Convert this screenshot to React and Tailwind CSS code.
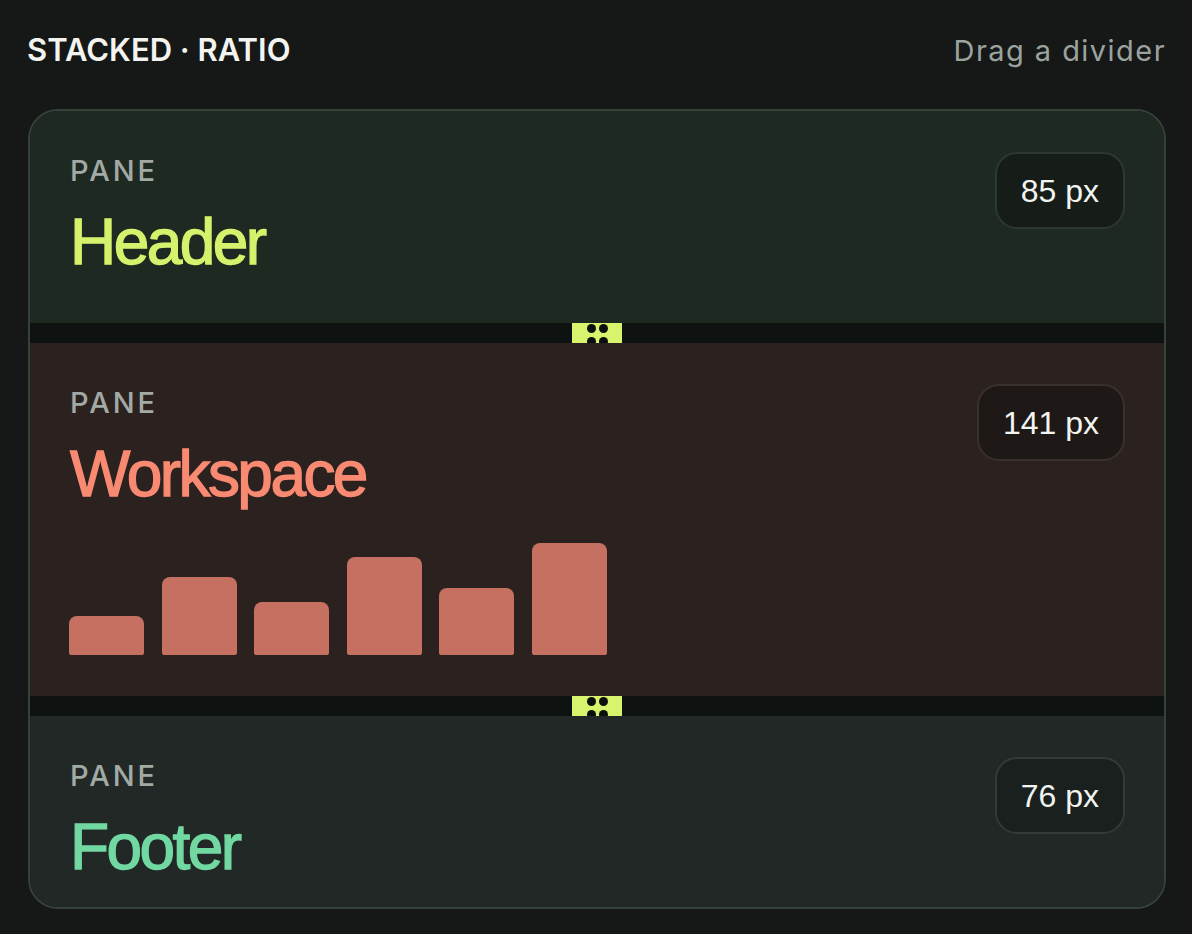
const panes = [
  {
    name: "Header",
    px: 85,
    height: "h-[212px]",
    bg: "bg-[#1e2922]",
    title: "text-[#d6f26c]",
    pill: "bg-[#161d19] border-[#2d3831]",
  },
  {
    name: "Workspace",
    px: 141,
    height: "h-[353px]",
    bg: "bg-[#2b2220]",
    title: "text-[#f98a72]",
    pill: "bg-[#1e1817] border-[#3a302c]",
    bars: [39, 78, 53, 98, 67, 112],
  },
  {
    name: "Footer",
    px: 76,
    height: "h-[191px]",
    bg: "bg-[#212826]",
    title: "text-[#72d8a2]",
    pill: "bg-[#1a201e] border-[#323b37]",
  },
];

function Divider() {
  return (
    <div className="flex h-[20px] justify-center bg-[#0e1210]">
      <div className="flex h-full w-[50px] justify-center overflow-hidden bg-[#d8f46c]">
        <div className="mt-[1px] grid h-[21px] grid-cols-2 gap-x-[3px] gap-y-[4px]">
          <span className="h-[9px] w-[9px] rounded-full bg-[#0c0f0d]" />
          <span className="h-[9px] w-[9px] rounded-full bg-[#0c0f0d]" />
          <span className="h-[9px] w-[9px] rounded-full bg-[#0c0f0d]" />
          <span className="h-[9px] w-[9px] rounded-full bg-[#0c0f0d]" />
        </div>
      </div>
    </div>
  );
}

function Pane({ pane }) {
  return (
    <section className={`${pane.height} ${pane.bg} flex flex-col pl-[40px] pr-[39px] pt-[41px] pb-[41px]`}>
      <div className="flex items-start justify-between">
        <div>
          <p className="font-['Inter',sans-serif] text-[29px] leading-[38px] font-medium tracking-[0.1em] text-[#a2aaa5]">
            PANE
          </p>
          <h2
            className={`mt-[16px] font-['Liberation_Sans',Arial,sans-serif] text-[64px] leading-[72px] tracking-[-0.04em] [-webkit-text-stroke:1.3px_currentColor] ${pane.title}`}
          >
            {pane.name}
          </h2>
        </div>
        <div
          className={`flex h-[77px] items-center rounded-[22px] border-2 px-[24px] font-['Liberation_Sans',Arial,sans-serif] text-[32px] text-[#f2f4f1] ${pane.pill}`}
        >
          {pane.px} px
        </div>
      </div>

      {pane.bars && (
        <div className="mt-auto -ml-[1px] flex h-[112px] items-end gap-[17.5px]">
          {pane.bars.map((h, i) => (
            <div
              key={i}
              className="w-[75px] rounded-t-[8px] rounded-b-[2px] bg-[#c57060]"
              style={{ height: h }}
            />
          ))}
        </div>
      )}
    </section>
  );
}

export default function App() {
  return (
    <main className="min-h-screen bg-[#151817] pl-[27px] pr-[26px] pt-[30px] pb-[26px]">
      <div className="flex items-baseline justify-between">
        <h1 className="font-['Inter',sans-serif] text-[31px] leading-[40px] font-semibold text-[#f3f4f0]">
          STACKED · RATIO
        </h1>
        <span className="font-['Inter',sans-serif] text-[29px] leading-[40px] tracking-[0.05em] text-[#9ba39f]">
          Drag a divider
        </span>
      </div>

      <div className="mt-[38px] ml-[1px] overflow-hidden rounded-[30px] border-2 border-[#36413a]">
        <Pane pane={panes[0]} />
        <Divider />
        <Pane pane={panes[1]} />
        <Divider />
        <Pane pane={panes[2]} />
      </div>
    </main>
  );
}
